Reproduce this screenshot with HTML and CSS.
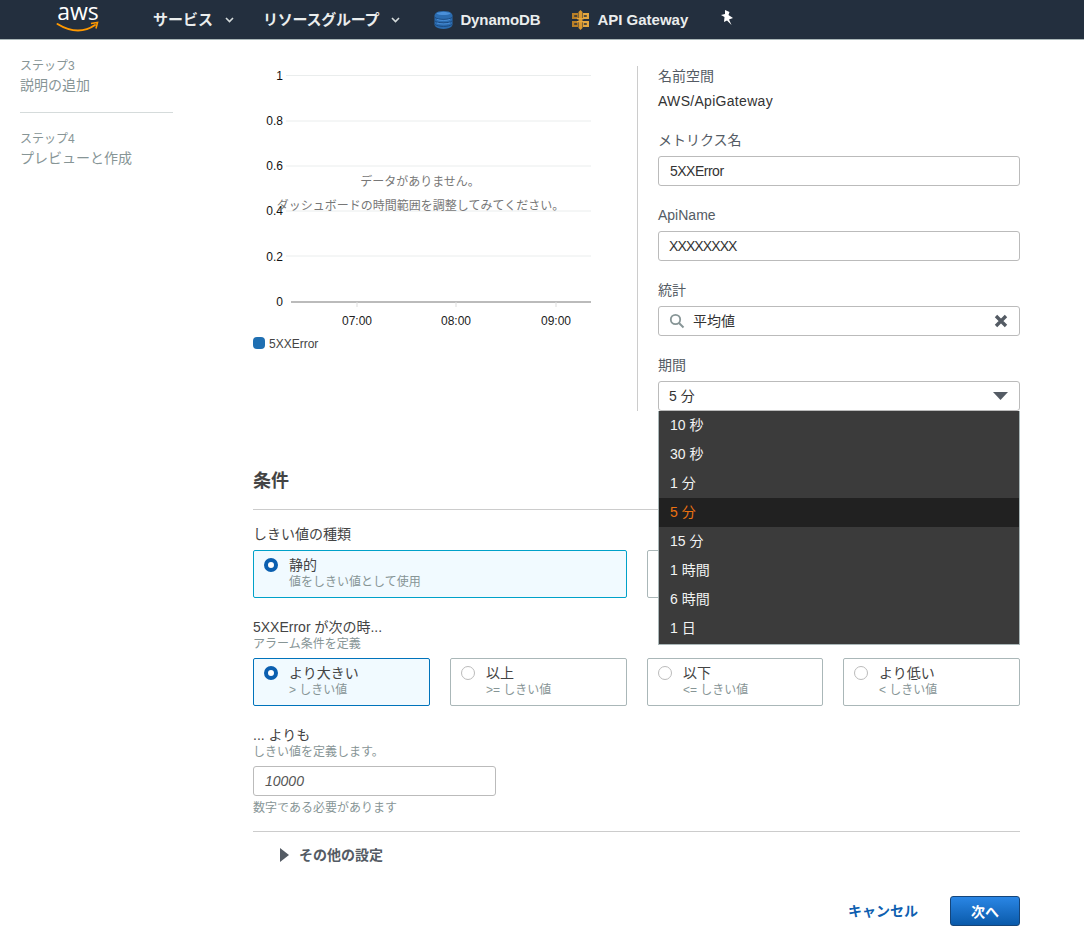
FILE: index.html
```html
<!DOCTYPE html>
<html lang="ja">
<head>
<meta charset="utf-8">
<title>アラームの作成</title>
<link rel="stylesheet" href="styles.css">
</head>
<body>
<nav class="topnav">
  <svg class="logo" width="44" height="39" viewBox="0 0 44 39">
    <text class="logo-text" x="22" y="20" text-anchor="middle">aws</text>
    <path d="M1.500 24C8 28 15 30.500 22 30.500c6 0 12-2 17-5.500" fill="none" stroke="#f90" stroke-width="2" stroke-linecap="round"/>
    <path d="M35 23.500l6.500-1-1.500 6" fill="none" stroke="#f90" stroke-width="1.600"/>
  </svg>
  <a class="nav-item nav-services">サービス<svg class="caret" width="9" height="6" viewBox="0 0 9 6"><path d="M1 1l3.500 3.500L8 1" fill="none" stroke="#d5dbdb" stroke-width="1.600"/></svg></a>
  <a class="nav-item nav-groups">リソースグループ<svg class="caret" width="9" height="6" viewBox="0 0 9 6"><path d="M1 1l3.500 3.500L8 1" fill="none" stroke="#d5dbdb" stroke-width="1.600"/></svg></a>
  <a class="nav-item nav-dynamo">
    <svg class="svc" width="19" height="20" viewBox="0 0 19 20">
      <path d="M1.500 3.500C4 .3 15 .3 17.500 3.500l1 1.500v10l-1 1.500C15 19.700 4 19.700 1.500 16.500l-1-1.500V5z" fill="#2b6cb0"/>
      <path d="M2.500 3.500C5 5.500 14 5.500 16.500 3.500 14 1.500 5 1.500 2.500 3.500z" fill="#4a90d9"/>
      <path d="M1 7.500c3 2.500 14 2.500 17 0M1 11c3 2.500 14 2.500 17 0M1 14.500c3 2.500 14 2.500 17 0" fill="none" stroke="#1b4a80" stroke-width="1"/>
      <path d="M3 9.500c3 1.300 10 1.300 13 0M3 13c3 1.300 10 1.300 13 0" fill="none" stroke="#4a90d9" stroke-width="1"/>
    </svg>DynamoDB</a>
  <a class="nav-item nav-api">
    <svg class="svc" width="17" height="20" viewBox="0 0 17 20">
      <path d="M0 3h6v6H0zM0 11h6v6H0z" fill="#b97f26"/>
      <path d="M11 3h6v6h-6zM11 11h6v6h-6z" fill="#e3a63f"/>
      <path d="M2.200 5.200h3v1.600h-3zM2.200 13.200h3v1.600h-3zM11.800 5.200h3v1.600h-3zM11.800 13.200h3v1.600h-3z" fill="#232f3e"/>
      <path d="M6.500 2l2-2 2 2v16l-2 2-2-2z" fill="#d8972f"/>
      <path d="M5 8h7v1.200H5zM5 11h7v1.200H5z" fill="#e3a63f"/>
    </svg>API Gateway</a>
  <svg class="pin" width="13" height="15" viewBox="0 0 13 15">
    <path d="M4 0l4.500 2-1 3L12 8 8 9.500l2.500 5.500L6 10.500 3 12l.5-5L0 5l4-1z" fill="#fff"/>
  </svg>
</nav>

<div class="page">
  <aside class="sidebar">
    <div class="step">
      <div class="step-num">ステップ3</div>
      <div class="step-title">説明の追加</div>
    </div>
    <div class="step step-last">
      <div class="step-num">ステップ4</div>
      <div class="step-title">プレビューと作成</div>
    </div>
  </aside>

  <main class="main">
    <section class="metric">
      <div class="chart">
        <svg class="chart-svg" width="338" height="290" viewBox="0 0 338 290">
          <g class="grid">
            <line x1="33" x2="338" y1="9.500" y2="9.500"/>
            <line x1="33" x2="338" y1="55" y2="55"/>
            <line x1="33" x2="338" y1="100" y2="100"/>
            <line x1="33" x2="338" y1="145" y2="145"/>
            <line x1="33" x2="338" y1="190" y2="190"/>
          </g>
          <line class="axis" x1="38" x2="338" y1="236" y2="236"/>
          <g class="ticks">
            <line x1="104" x2="104" y1="236" y2="241"/>
            <line x1="203" x2="203" y1="236" y2="241"/>
            <line x1="303" x2="303" y1="236" y2="241"/>
          </g>
          <g class="ylabels">
            <text x="30" y="14">1</text>
            <text x="30" y="59">0.8</text>
            <text x="30" y="104">0.6</text>
            <text x="30" y="149">0.4</text>
            <text x="30" y="195">0.2</text>
            <text x="30" y="240">0</text>
          </g>
          <g class="xlabels">
            <text x="104" y="259">07:00</text>
            <text x="203" y="259">08:00</text>
            <text x="303" y="259">09:00</text>
          </g>
          <rect x="0" y="271" width="12" height="12" rx="4" fill="#1f6fb2"/>
          <text class="legend" x="16" y="282">5XXError</text>
        </svg>
        <div class="nodata">
          <div class="nodata-a">データがありません。</div>
          <div class="nodata-b">ダッシュボードの時間範囲を調整してみてください。</div>
        </div>
      </div>

      <div class="fields">
        <div class="field field-ns">
          <label class="label">名前空間</label>
          <div class="value">AWS/ApiGateway</div>
        </div>
        <div class="field">
          <label class="label">メトリクス名</label>
          <div class="input tight">5XXError</div>
        </div>
        <div class="field">
          <label class="label">ApiName</label>
          <div class="input tighter">XXXXXXXX</div>
        </div>
        <div class="field">
          <label class="label">統計</label>
          <div class="input input-search">
            <svg class="search" width="16" height="16" viewBox="0 0 16 16"><circle cx="6.500" cy="6.500" r="4.700" fill="none" stroke="#879596" stroke-width="1.800"/><path d="M10 10l4.500 4.500" stroke="#879596" stroke-width="2"/></svg>
            <span class="grow">平均値</span>
            <svg class="clear" width="14" height="14" viewBox="0 0 14 14"><path d="M2 2l10 10M12 2L2 12" stroke="#545b64" stroke-width="3.400"/></svg>
          </div>
        </div>
        <div class="field field-select">
          <label class="label">期間</label>
          <div class="input input-select">
            <span class="grow">5 分</span>
            <svg width="15" height="8" viewBox="0 0 15 8"><path d="M0 0h15L7.500 8z" fill="#545b64"/></svg>
          </div>
          <ul class="menu">
            <li>10 秒</li>
            <li>30 秒</li>
            <li>1 分</li>
            <li class="selected">5 分</li>
            <li>15 分</li>
            <li>1 時間</li>
            <li>6 時間</li>
            <li>1 日</li>
          </ul>
        </div>
      </div>
    </section>

    <h2 class="section-title">条件</h2>

    <div class="group-label">しきい値の種類</div>
    <div class="cards cards-2">
      <div class="card on"><span class="radio"></span><div><div class="card-title">静的</div><div class="card-sub">値をしきい値として使用</div></div></div>
      <div class="card"></div>
    </div>

    <div class="group-label group-when">5XXError が次の時...</div>
    <div class="group-hint">アラーム条件を定義</div>
    <div class="cards cards-4">
      <div class="card on"><span class="radio"></span><div><div class="card-title">より大きい</div><div class="card-sub">&gt; しきい値</div></div></div>
      <div class="card"><span class="radio"></span><div><div class="card-title">以上</div><div class="card-sub">&gt;= しきい値</div></div></div>
      <div class="card"><span class="radio"></span><div><div class="card-title">以下</div><div class="card-sub">&lt;= しきい値</div></div></div>
      <div class="card"><span class="radio"></span><div><div class="card-title">より低い</div><div class="card-sub">&lt; しきい値</div></div></div>
    </div>

    <div class="group-label group-than">... よりも</div>
    <div class="group-hint">しきい値を定義します。</div>
    <div class="input input-threshold">10000</div>
    <div class="group-hint hint-below">数字である必要があります</div>

    <div class="more"><svg width="9" height="14" viewBox="0 0 9 14"><path d="M0 0l9 7-9 7z" fill="#545b64"/></svg><span>その他の設定</span></div>

    <div class="actions">
      <a class="cancel">キャンセル</a>
      <button class="next">次へ</button>
    </div>
  </main>
</div>
</body>
</html>
```
FILE: styles.css
```css
* { box-sizing: border-box; }
html, body { margin: 0; padding: 0; }
body {
  background: #fff;
  color: #444;
  font-family: "Liberation Sans", "Noto Sans CJK JP", sans-serif;
  font-size: 14px;
  line-height: 20px;
  height: 943px;
  overflow: hidden;
}

/* top navigation */
.topnav {
  display: flex;
  align-items: center;
  height: 40px;
  background: #232f3e;
  border-bottom: 1px solid #aab7b8;
  color: #fff;
  font-size: 15px;
  font-weight: 700;
  padding-left: 56px;
}
.logo { flex: none; overflow: visible; }
.logo-text { font-family: "Open Sans", sans-serif; font-size: 23px; font-weight: 400; fill: #fff; }
.nav-item { display: flex; align-items: center; color: #eaeded; }
.caret { margin-left: 12px; }
.nav-services { margin-left: 53px; }
.nav-groups { margin-left: 29px; letter-spacing: -0.25px; }
.nav-dynamo { margin-left: 34px; letter-spacing: -0.1px; }
.nav-api { margin-left: 32px; }
.svc { margin-right: 7px; }
.nav-api .svc { margin-right: 8px; }
.pin { margin-left: 33px; margin-bottom: 4px; }

/* layout */
.page { display: flex; }
.sidebar { flex: none; width: 153px; margin-left: 20px; padding-top: 16px; }
.step { padding-bottom: 17px; border-bottom: 1px solid #d5dbdb; }
.step-last { border-bottom: 0; padding-top: 16px; }
.step-num { font-size: 12px; line-height: 20px; color: #879596; }
.step-title { font-size: 14px; line-height: 19px; color: #879596; }

.main { flex: none; width: 767px; margin-left: 80px; }

/* metric */
.metric { display: flex; margin-top: 26px; height: 345px; }
.chart { position: relative; flex: none; width: 338px; height: 290px; }
.chart-svg { display: block; }
.grid line { stroke: #eaeded; stroke-width: 1; }
.axis { stroke: #bbb; stroke-width: 2; }
.ticks line { stroke: #ddd; stroke-width: 1; }
.ylabels text { font-size: 12px; text-anchor: end; fill: #111; }
.xlabels text { font-size: 12px; text-anchor: middle; fill: #222; }
.legend { font-size: 12px; fill: #444; }
.nodata {
  position: absolute;
  left: 0; right: 0; top: 106px;
  text-align: center;
  color: #777;
  font-size: 12px;
  line-height: 20px;
}
.nodata-a { margin-left: -4px; }
.nodata-b { margin-top: 4px; margin-left: -3px; }

.fields {
  flex: none;
  width: 383px;
  margin-left: 46px;
  padding-left: 20px;
  border-left: 1px solid #ccc;
}
.field { position: relative; margin-bottom: 19px; }
.field-select { margin-bottom: 0; }
.label { display: block; color: #545b64; margin-bottom: 6px; line-height: 20px; }
.field-ns .label { margin-bottom: 5px; }
.value { color: #333; line-height: 20px; letter-spacing: 0.3px; }
.input {
  display: flex;
  align-items: center;
  height: 30px;
  padding: 0 10px;
  border: 1px solid #bbb;
  border-radius: 3px;
  background: #fff;
  color: #333;
}
.tight { letter-spacing: -0.5px; padding-left: 11px; }
.tighter { letter-spacing: -0.9px; }
.grow { flex: 1; }
.search { margin-right: 8px; }
.clear { margin-right: 1px; }
.input-select svg { margin-right: 1px; }
.menu {
  position: absolute;
  left: 0; right: 0; top: 56px;
  margin: 0;
  padding: 0 0 1px;
  list-style: none;
  background: #3b3b3b;
  border: 1px solid #aab7b8;
  border-top: 0;
  color: #f2f3f3;
}
.menu li { height: 29px; line-height: 29px; padding-left: 11px; }
.menu .selected { background: #212121; color: #ec7211; }

/* conditions */
.section-title {
  margin: 0;
  padding: 58px 0 16px;
  border-bottom: 1px solid #ccc;
  font-size: 18px;
  line-height: 24px;
  font-weight: 700;
  color: #444;
}
.group-label { margin-top: 14px; line-height: 20px; color: #444; }
.group-when { margin-top: 19px; }
.group-than { margin-top: 19px; }
.group-hint { font-size: 12px; line-height: 14px; color: #879596; }
.hint-below { margin-top: 4px; line-height: 16px; }
.cards { display: grid; gap: 20px; margin-top: 6px; }
.cards-2 { grid-template-columns: 374px 373px; }
.cards-4 { grid-template-columns: 177px 177px 176px 177px; margin-top: 7px; }
.card {
  display: flex;
  height: 48px;
  padding: 4px 10px;
  border: 1px solid #aab7b8;
  border-radius: 2px;
  background: #fff;
}
.card.on { border-color: #00a1c9; background: #f1faff; }
.cards-4 .card.on { border-color: #0073bb; }
.radio {
  flex: none;
  width: 14px;
  height: 14px;
  margin: 3px 11px 0 0;
  border: 1px solid #bbb;
  border-radius: 50%;
  background: #fff;
}
.card.on .radio { border: 4px solid #0b5fb0; }
.card-title { line-height: 20px; color: #444; }
.card-sub { font-size: 12px; line-height: 15px; color: #879596; }

.input-threshold { width: 243px; margin-top: 7px; padding-left: 11px; font-style: italic; color: #555; }

.more {
  display: flex;
  align-items: center;
  gap: 10px;
  margin-top: 15px;
  padding: 13px 0 0 27px;
  border-top: 1px solid #ccc;
  font-weight: 700;
  color: #545b64;
  line-height: 20px;
}

.actions {
  display: flex;
  justify-content: flex-end;
  align-items: center;
  gap: 32px;
  margin-top: 31px;
}
.cancel { font-weight: 700; color: #0f5fb0; }
.next {
  width: 70px;
  height: 30px;
  border: 1px solid #15457a;
  border-radius: 3px;
  background: linear-gradient(#2a86e5, #0a5aaa);
  color: #fff;
  font: 700 14px "Liberation Sans", "Noto Sans CJK JP", sans-serif;
}
```
